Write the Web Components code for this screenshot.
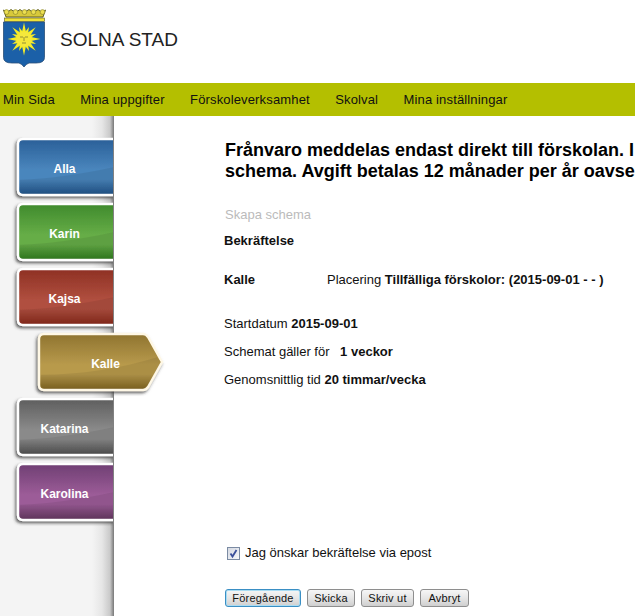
<!DOCTYPE html>
<html lang="sv"><head><meta charset="utf-8"><title>Solna Stad</title>
<style>
html,body{margin:0;height:100%;overflow:hidden;background:#fff;font-family:"Liberation Sans",Arial,sans-serif;color:#111}
body{width:635px;height:616px}
</style></head><body>
<solna-app></solna-app>
<template id="t-app"><style>
:host{display:flex;flex-direction:column;width:635px;height:616px;overflow:hidden}
.body{display:flex;flex:1;min-height:0}
</style>
<solna-header></solna-header>
<solna-nav></solna-nav>
<div class="body">
<solna-sidebar>
<child-tab color="blue">Alla</child-tab>
<child-tab color="green">Karin</child-tab>
<child-tab color="red">Kajsa</child-tab>
<child-tab color="gold" active>Kalle</child-tab>
<child-tab color="gray">Katarina</child-tab>
<child-tab color="purple">Karolina</child-tab>
</solna-sidebar>
<solna-main></solna-main>
</div></template>

<template id="t-header"><style>
:host{display:flex;align-items:flex-start;height:83px;background:#fff;flex:none}
svg{display:block;margin:8px 0 0 2px;flex:none}
span{font-size:19px;color:#222;margin:29px 0 0 13px;line-height:22px;white-space:nowrap}
</style>
<svg width="45" height="60" viewBox="0 0 45 60">
<path d="M1.5 2 L5 4.5 L9 1.5 L13.5 4.5 L18 1.5 L22 4.5 L27 1.5 L31 4.5 L36 1.5 L40 4.5 L43.5 2 L41 9 H4Z" fill="#d8c93a" stroke="#55551c" stroke-width=".9"/>
<circle cx="4.5" cy="4" r="2.4" fill="#ecdf52" stroke="#6c6a22" stroke-width=".5"/><circle cx="13.5" cy="4" r="2.4" fill="#ecdf52" stroke="#6c6a22" stroke-width=".5"/><circle cx="22.5" cy="4" r="2.4" fill="#ecdf52" stroke="#6c6a22" stroke-width=".5"/><circle cx="31.5" cy="4" r="2.4" fill="#ecdf52" stroke="#6c6a22" stroke-width=".5"/><circle cx="40.5" cy="4" r="2.4" fill="#ecdf52" stroke="#6c6a22" stroke-width=".5"/>
<rect x="2.5" y="10" width="40" height="3.5" fill="#f0e23a" stroke="#55551c" stroke-width=".6"/>
<path d="M1.5 14 H42.5 V49.500 Q42.500 55 34 55 H27 Q24 56 22 59 Q20 56 17 55 H10 Q1.500 55 1.500 49.500Z" fill="#1b60a8" stroke="#2b4f78" stroke-width=".8"/>
<g fill="#f7ec26" transform="translate(22 31)">
<path d="M-2.200 -6 L0 -16.500 L2.200 -6Z"/>
<path d="M-1.800 -6 L0 -13 L1.800 -6Z" transform="rotate(22.500)"/><path d="M-2.200 -6 L0 -16.500 L2.200 -6Z" transform="rotate(45)"/><path d="M-1.800 -6 L0 -13 L1.800 -6Z" transform="rotate(67.500)"/><path d="M-2.200 -6 L0 -16.500 L2.200 -6Z" transform="rotate(90)"/><path d="M-1.800 -6 L0 -13 L1.800 -6Z" transform="rotate(112.500)"/><path d="M-2.200 -6 L0 -16.500 L2.200 -6Z" transform="rotate(135)"/><path d="M-1.800 -6 L0 -13 L1.800 -6Z" transform="rotate(157.500)"/><path d="M-2.200 -6 L0 -16.500 L2.200 -6Z" transform="rotate(180)"/><path d="M-1.800 -6 L0 -13 L1.800 -6Z" transform="rotate(202.500)"/><path d="M-2.200 -6 L0 -16.500 L2.200 -6Z" transform="rotate(225)"/><path d="M-1.800 -6 L0 -13 L1.800 -6Z" transform="rotate(247.500)"/><path d="M-2.200 -6 L0 -16.500 L2.200 -6Z" transform="rotate(270)"/><path d="M-1.800 -6 L0 -13 L1.800 -6Z" transform="rotate(292.500)"/><path d="M-2.200 -6 L0 -16.500 L2.200 -6Z" transform="rotate(315)"/><path d="M-1.800 -6 L0 -13 L1.800 -6Z" transform="rotate(337.500)"/>
<circle r="7.500" fill="#f5e83c"/>
<path d="M-4 -2 h3 M1 -2 h3 M0 -2 v4 M-2 4 h4" stroke="#8a8630" stroke-width=".9" fill="none"/>
</g></svg><span>SOLNA STAD</span></template>

<template id="t-nav"><style>
:host{display:flex;align-items:center;gap:25.4px;height:33px;background:#b4bf00;padding-left:3px;flex:none;font-size:13px;letter-spacing:.15px;color:#111;white-space:nowrap}
</style><span>Min Sida</span><span>Mina uppgifter</span><span>Förskoleverksamhet</span><span>Skolval</span><span>Mina inställningar</span></template>

<template id="t-sidebar"><style>
:host{display:flex;flex-direction:column;gap:7px;width:114px;flex:none;box-sizing:border-box;padding-top:22px;position:relative;z-index:1;
background:linear-gradient(90deg,#f4f4f4 0,#f4f4f4 92px,#e6e6e6 102px,#c9c9c9 110px,#8c8c8c 113px,#777 114px)}
</style><slot></slot></template>

<template id="t-tab"><style>
:host{display:block;margin-left:17px;width:97px;height:58px;position:relative;flex:none}
:host([active]){margin-left:38px;width:126px}
svg{position:absolute;inset:0;display:block;overflow:visible}
span{position:relative;display:flex;align-items:center;justify-content:center;height:100%;font:bold 12px "Liberation Sans",Arial,sans-serif;color:#fff;padding:3px 2px 0 0;box-sizing:border-box}
:host([active]) span{padding:3px 0 0 9px}
</style><svg id="s" xmlns="http://www.w3.org/2000/svg"></svg><span><slot></slot></span></template>

<template id="t-main"><style>
:host{display:block;flex:1;min-width:0;background:#fff;padding:24px 0 0 110px;overflow:hidden;font-size:13px;color:#111;white-space:nowrap}
h1{font-size:18px;line-height:21px;margin:0 0 0 1px;font-weight:bold;color:#000}
.muted{color:#bbb;margin:26px 0 0 1px;line-height:14px}
.conf{font-weight:bold;margin-top:12px;line-height:14px}
.row{display:flex;margin-top:25px;line-height:14px}
.row b:first-child{width:103px}
.start{margin-top:30px;line-height:14px}
.line{margin-top:14px;line-height:14px}
.gap{margin-left:7px}
.check{display:flex;align-items:center;gap:5px;margin:159px 0 0 3px;line-height:14px}
.box{width:11px;height:11px;border:1px solid #7b8ba3;background:linear-gradient(135deg,#d5d9e2,#f6f7fa);display:block;flex:none}
.box svg{display:block}
.btns{display:flex;gap:6px;margin:29px 0 0 1px}
</style>
<h1>Frånvaro meddelas endast direkt till förskolan. I<br>schema. Avgift betalas 12 månader per år oavse</h1>
<div class="muted">Skapa schema</div>
<div class="conf">Bekräftelse</div>
<div class="row"><b>Kalle</b><span>Placering <b>Tillfälliga förskolor: (2015-09-01 - - )</b></span></div>
<div class="start">Startdatum <b>2015-09-01</b></div>
<div class="line">Schemat gäller för <b class="gap">1 veckor</b></div>
<div class="line">Genomsnittlig tid <b>20 timmar/vecka</b></div>
<div class="check"><span class="box"><svg width="11" height="11" viewBox="0 0 11 11"><path d="M2.500 5.500 L4.500 8.500 L8.500 2" fill="none" stroke="#3a4f9a" stroke-width="1.800"/></svg></span><span>Jag önskar bekräftelse via epost</span></div>
<div class="btns"><solna-button primary style="width:74px">Föregående</solna-button><solna-button style="width:46px">Skicka</solna-button><solna-button style="width:51px">Skriv ut</solna-button><solna-button style="width:47px">Avbryt</solna-button></div>
</template>

<template id="t-btn"><style>
:host{display:inline-flex;align-items:center;justify-content:center;height:16px;box-sizing:content-box;padding:0;border:1px solid #8e8e8e;border-radius:3px;background:linear-gradient(#f6f6f6,#e6e6e6 50%,#cfcfcf);font-size:11px;letter-spacing:.2px;color:#111}
:host([primary]){border-color:#3a8fc4;box-shadow:inset 0 0 0 1px #a9dcf3}
</style><slot></slot></template>

<script>
const mk=(name,id,extra)=>customElements.define(name,class extends HTMLElement{
  connectedCallback(){ if(!this.shadowRoot){ this.attachShadow({mode:'open'}).appendChild(document.getElementById(id).content.cloneNode(true)); extra&&extra(this);} }
});
const C={blue:['#2a5f98','#4a86bd','#1f5288'],green:['#3f8a2d','#66ad47','#2f7d1f'],red:['#8e3023','#b04f3f','#88281a'],gold:['#8f7430','#b89a4c','#80641f'],gray:['#5e5e5e','#8a8a8a','#4e4e4e'],purple:['#6f3f73','#9c5c98','#63375f']};
let n=0;
const draw=el=>{
  const c=C[el.getAttribute('color')],a=el.hasAttribute('active'),id='g'+(n++);
  const w=a?125:97,h=58;
  const p=a?`M1 6 Q1 1 6 1 H${w-20} Q${w-17} 1 ${w-15} 4 L${w-1} ${h/2} L${w-15} ${h-4} Q${w-17} ${h-1} ${w-20} ${h-1} H6 Q1 ${h-1} 1 ${h-6}Z`:`M${w+1} 1 H6 Q1 1 1 6 V${h-6} Q1 ${h-1} 6 ${h-1} H${w+1}`;
  const border=a?'#fff8e6':'#fff';
  const gloss=a?`M3 ${h*0.72} Q${w*0.5} ${h*0.72} ${w-6} ${h*0.42} L${w-2} ${h/2} L${w-16} ${h-4} Q${w-17} ${h-2} ${w-20} ${h-2} H6 L3 ${h-5}Z`:`M3 ${h*0.72} Q${w*0.45} ${h*0.7} ${w} ${h*0.5} V${h-2} H5 L3 ${h-5}Z`;
  const s=el.shadowRoot.getElementById('s');
  s.setAttribute('width',a?126:97);s.setAttribute('height',h);
  s.innerHTML=`<defs><linearGradient id="${id}" x1="0" x2="0" y1="0" y2="1"><stop offset="0" stop-color="${c[0]}"/><stop offset=".55" stop-color="${c[1]}"/><stop offset=".72" stop-color="${c[1]}"/><stop offset="1" stop-color="${c[2]}"/></linearGradient>
  <filter id="${id}f" x="-10%" y="-10%" width="120%" height="125%"><feDropShadow dx="-1.500" dy="2" stdDeviation="1.600" flood-color="#333" flood-opacity=".75"/></filter>
  <clipPath id="${id}c"><rect x="-6" y="-6" width="${a?140:102}" height="${h+14}"/></clipPath></defs>
  <g clip-path="url(#${id}c)"><path d="${p}" fill="url(#${id})" stroke="${border}" stroke-width="2.400" filter="url(#${id}f)"/>
  <path d="${gloss}" fill="#000" opacity=".07"/></g>`;
};
mk('solna-app','t-app');mk('solna-header','t-header');mk('solna-nav','t-nav');mk('solna-sidebar','t-sidebar');mk('solna-main','t-main');mk('solna-button','t-btn');mk('child-tab','t-tab',draw);
</script>
</body></html>
